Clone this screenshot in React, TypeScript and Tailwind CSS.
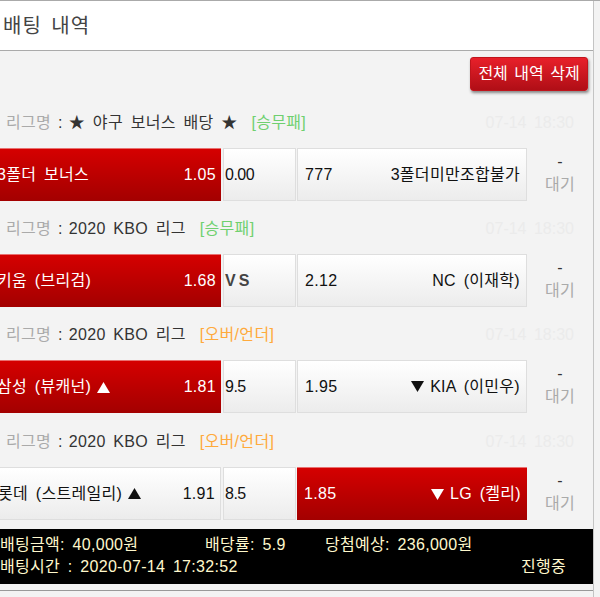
import React from "react";

type Row = {
  league: string;
  type: string;
  typeColor: string;
  t1: string;
  t1Tri?: "up";
  o1: string;
  mid: string;
  o2: string;
  t2: string;
  t2Tri?: "down";
  sel: 1 | 2;
};

const rows: Row[] = [
  { league: "★ 야구 보너스 배당 ★", type: "[승무패]", typeColor: "text-[#6fd06f]", t1: "3폴더 보너스", o1: "1.05", mid: "0.00", o2: "777", t2: "3폴더미만조합불가", sel: 1 },
  { league: "2020 KBO 리그", type: "[승무패]", typeColor: "text-[#6fd06f]", t1: "키움 (브리검)", o1: "1.68", mid: "VS", o2: "2.12", t2: "NC (이재학)", sel: 1 },
  { league: "2020 KBO 리그", type: "[오버/언더]", typeColor: "text-[#ffaa3c]", t1: "삼성 (뷰캐넌)", t1Tri: "up", o1: "1.81", mid: "9.5", o2: "1.95", t2: "KIA (이민우)", t2Tri: "down", sel: 1 },
  { league: "2020 KBO 리그", type: "[오버/언더]", typeColor: "text-[#ffaa3c]", t1: "롯데 (스트레일리)", t1Tri: "up", o1: "1.91", mid: "8.5", o2: "1.85", t2: "LG (켈리)", t2Tri: "down", sel: 2 },
];

const redBox = "bg-gradient-to-b from-[#d50000] to-[#a30000] border-t border-[#e87070] text-white";
const whiteBox = "bg-gradient-to-b from-[#ffffff] to-[#ececec] border border-[#dedede] text-[#111]";

function Tri({ dir, color }: { dir: "up" | "down"; color: string }) {
  return (
    <svg width="13" height="11" viewBox="0 0 13 11" className="inline-block">
      {dir === "up" ? (
        <polygon points="6.5,0 13,11 0,11" fill={color} />
      ) : (
        <polygon points="0,0 13,0 6.5,11" fill={color} />
      )}
    </svg>
  );
}

function BetRow({ r, idx }: { r: Row; idx: number }) {
  const c1 = r.sel === 1 ? "#ffffff" : "#111111";
  const c2 = r.sel === 2 ? "#ffffff" : "#111111";
  return (
    <div className={idx === 0 ? "" : idx === 3 ? "mt-[17px]" : "mt-[16px]"}>
      <div className="h-[24px] flex items-center pl-[6px] whitespace-nowrap">
        <span className="text-[#aaaaaa]">리그명</span>
        <span className="text-[#333] ml-[7px]">:</span>
        <span className="text-[#333] ml-[6px]">{r.league}</span>
        <span className={`${r.typeColor} ml-[14px]`}>{r.type}</span>
        <span className="ml-auto mr-[19px] text-[#ebebeb] tracking-[0px]">07-14 18:30</span>
      </div>
      <div className="flex h-[53px] mt-[13px] ml-[-8px] whitespace-nowrap">
        <div className={`w-[229px] flex items-center justify-between pl-[5px] pr-[5px] ${r.sel === 1 ? redBox : whiteBox}`}>
          <span className="flex items-center">
            {r.t1}
            {r.t1Tri && (
              <span className="ml-[6px] flex items-center">
                <Tri dir="up" color={c1} />
              </span>
            )}
          </span>
          <span>{r.o1}</span>
        </div>
        <div className={`w-[73px] ml-[2px] flex items-center pl-[1px] ${whiteBox}`}>
          {r.mid === "VS" ? (
            <span className="text-[#444] font-bold tracking-[3px]">VS</span>
          ) : (
            <span className="tracking-[-0.5px]">{r.mid}</span>
          )}
        </div>
        <div className={`w-[230px] ml-[1px] flex items-center justify-between pl-[7px] pr-[6px] ${r.sel === 2 ? redBox : whiteBox}`}>
          <span>{r.o2}</span>
          <span className="flex items-center">
            {r.t2Tri && (
              <span className="mr-[6px] flex items-center">
                <Tri dir="down" color={c2} />
              </span>
            )}
            {r.t2}
          </span>
        </div>
        <div className="flex-1 flex flex-col items-center justify-center leading-[23px] pb-[4px]">
          <span className="text-[#333]">-</span>
          <span className="text-[#aaaaaa]">대기</span>
        </div>
      </div>
    </div>
  );
}

export default function App() {
  return (
    <div
      className="w-[600px] h-[597px] bg-[#f3f3f3] border-t border-[#aaaaaa] overflow-hidden text-[16px] tracking-[0.3px] [word-spacing:3px]"
      style={{ fontFamily: '"Liberation Sans", "Noto Sans CJK KR", sans-serif' }}
    >
      <div className="w-[594px] h-full border-r border-[#c4c4c4] flex flex-col">
        <div className="h-[50px] shrink-0 bg-white border-b border-[#aaaaaa] flex items-center pl-[3px] text-[20px] tracking-[1px] text-[#444]">
          배팅 내역
        </div>
        <div className="flex justify-end pr-[5px] mt-[6px]">
          <button className="w-[118px] h-[34px] rounded-[3px] bg-gradient-to-b from-[#e8202a] to-[#b00e16] border border-[#c0141c] text-white text-[16px] tracking-[0px] [word-spacing:2px] shadow-[1px_2px_3px_rgba(0,0,0,0.45)]">
            전체 내역 삭제
          </button>
        </div>
        <div className="mt-[20px]">
          {rows.map((r, i) => (
            <BetRow key={i} r={r} idx={i} />
          ))}
        </div>
        <div className="mt-[9px] h-[55px] bg-black text-[#fff8cc] pt-[5px] leading-[22px] whitespace-nowrap">
          <div className="flex">
            <span className="w-[205px]">배팅금액: 40,000원</span>
            <span className="w-[120px]">배당률: 5.9</span>
            <span>당첨예상: 236,000원</span>
          </div>
          <div className="flex justify-between pr-[27px]">
            <span>배팅시간 : 2020-07-14 17:32:52</span>
            <span>진행중</span>
          </div>
        </div>
        <div className="mt-[6px] h-[1px] bg-[#999]" />
      </div>
    </div>
  );
}
